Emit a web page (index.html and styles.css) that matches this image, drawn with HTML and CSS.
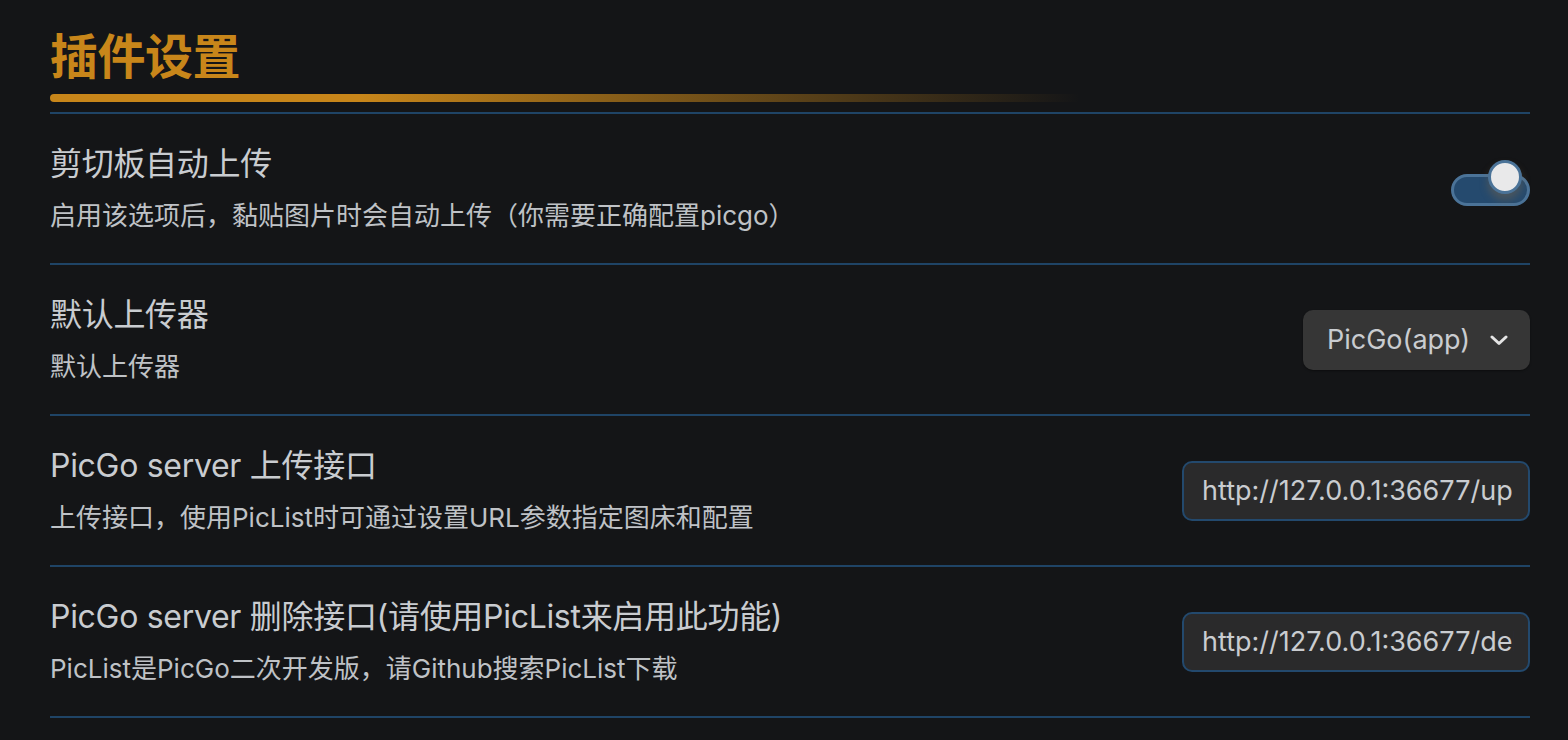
FILE: index.html
```html
<!DOCTYPE html>
<html lang="zh-CN">
<head>
<meta charset="utf-8">
<title>插件设置</title>
<link rel="stylesheet" href="styles.css">
</head>
<body>
<div class="settings">
  <div class="heading">
    <h2 class="heading-title">插件设置</h2>
    <div class="heading-bar"></div>
  </div>

  <div class="setting-item">
    <div class="info">
      <div class="name">剪切板自动上传</div>
      <div class="desc">启用该选项后，黏贴图片时会自动上传（你需要正确配置picgo）</div>
    </div>
    <div class="control">
      <div class="toggle"><div class="knob"></div></div>
    </div>
  </div>

  <div class="setting-item">
    <div class="info">
      <div class="name">默认上传器</div>
      <div class="desc">默认上传器</div>
    </div>
    <div class="control">
      <div class="dropdown">
        <span>PicGo(app)</span>
        <svg class="chev" width="18" height="12" viewBox="0 0 18 12"><path d="M2 3 L9 9.5 L16 3" fill="none" stroke="#e4e4e4" stroke-width="3" stroke-linecap="round" stroke-linejoin="round"/></svg>
      </div>
    </div>
  </div>

  <div class="setting-item">
    <div class="info">
      <div class="name">PicGo server 上传接口</div>
      <div class="desc">上传接口，使用PicList时可通过设置URL参数指定图床和配置</div>
    </div>
    <div class="control">
      <input class="text-input" type="text" value="http://127.0.0.1:36677/upload">
    </div>
  </div>

  <div class="setting-item">
    <div class="info">
      <div class="name">PicGo server 删除接口(请使用PicList来启用此功能)</div>
      <div class="desc">PicList是PicGo二次开发版，请Github搜索PicList下载</div>
    </div>
    <div class="control">
      <input class="text-input" type="text" value="http://127.0.0.1:36677/delete">
    </div>
  </div>
</div>
</body>
</html>
```

FILE: styles.css
```css
html, body {
  margin: 0;
  padding: 0;
  background: #141517;
}
body {
  font-family: Inter, "Noto Sans CJK SC", sans-serif;
  color: #c9ccd0;
}
.settings {
  padding: 0 38px 0 50px;
}
.heading {
  padding-top: 28px;
  border-bottom: 2px solid #1f4466;
  padding-bottom: 10px;
}
.heading-title {
  margin: 0;
  font-size: 48px;
  line-height: 58px;
  font-weight: 700;
  color: #c8861a;
  letter-spacing: -0.5px;
}
.heading-bar {
  margin-top: 8px;
  width: 1030px;
  height: 8px;
  border-radius: 4px;
  background: linear-gradient(to right, #c8861a 0%, #c8861a 30%, rgba(200,134,26,0) 100%);
}
.setting-item {
  display: flex;
  align-items: center;
  justify-content: space-between;
  height: 149px;
  border-bottom: 2px solid #1f4466;
}
.info {
  display: flex;
  flex-direction: column;
  gap: 14px;
}
.name {
  font-size: 32px;
  line-height: 40px;
  letter-spacing: -0.3px;
}
.desc {
  font-size: 26px;
  line-height: 36px;
  color: #bfc2c6;
}
.control {
  display: flex;
  align-items: center;
}
.toggle {
  position: relative;
  box-sizing: border-box;
  width: 79px;
  height: 32px;
  border-radius: 16px;
  background: #254a6e;
  border: 3px solid #4b7398;
  margin-top: 2px;
}
.knob {
  position: absolute;
  box-sizing: border-box;
  width: 34px;
  height: 34px;
  border-radius: 50%;
  right: 5px;
  top: -17px;
  background: #e9e9ea;
  border: 3px solid #4b7398;
  box-shadow: 0 6px 8px rgba(150, 110, 60, 0.35);
}
.dropdown {
  box-sizing: border-box;
  width: 227px;
  height: 60px;
  background: #363636;
  border-radius: 10px;
  display: flex;
  align-items: center;
  justify-content: space-between;
  padding: 0 22px 0 24px;
  font-size: 27px;
  color: #c9ccd0;
  box-shadow: 0 1px 2px rgba(0,0,0,0.4);
}
.chev {
  display: block;
}
.text-input {
  box-sizing: border-box;
  width: 348px;
  height: 60px;
  background: #2a2a2b;
  border: 2px solid #23496d;
  border-radius: 10px;
  padding: 0 14px 0 18px;
  font-family: Inter, "Noto Sans CJK SC", sans-serif;
  font-size: 27px;
  color: #c9ccd0;
  outline: none;
}
```
